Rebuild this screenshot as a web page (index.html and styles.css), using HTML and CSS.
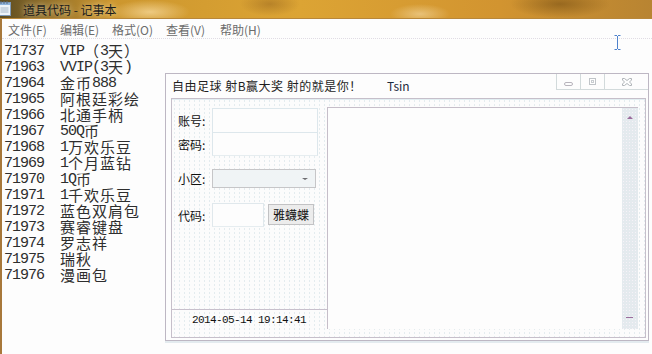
FILE: index.html
```html
<!DOCTYPE html>
<html lang="zh-CN">
<head>
    <meta charset="UTF-8">
    <title>道具代码 - 记事本</title>
    <link rel="stylesheet" href="styles.css">
</head>
<body>
    <div class="notepad">
        <div class="titlebar">
            <svg class="app-icon" width="14" height="16" viewBox="0 0 14 16">
                <rect x="0.5" y="2.5" width="12" height="13" fill="#eef4fa" stroke="#7f9ab8"/>
                <rect x="1" y="3" width="11" height="2" fill="#8fb4dc"/>
                <path d="M3 1v3M6 1v3M9 1v3" stroke="#5a6e88" stroke-width="1"/>
                <path d="M2.5 8h8M2.5 10h8M2.5 12h8" stroke="#a8b8c8" stroke-width="1"/>
            </svg>
            <span class="title-text">道具代码 - 记事本</span>
        </div>
        <div class="window-body">
            <div class="menubar">
                <span>文件(F)</span>
                <span>编辑(E)</span>
                <span class="wide">格式(O)</span>
                <span class="wide">查看(V)</span>
                <span>帮助(H)</span>
            </div>
            <div class="editor">
                <div class="line"><span class="code">71737</span>VIP<span class="w">（</span>3<span class="w">天）</span></div>
                <div class="line"><span class="code">71963</span>VVIP(3<span class="w">天</span>)</div>
                <div class="line"><span class="code">71964</span><span class="w">金币</span>888</div>
                <div class="line"><span class="code">71965</span><span class="w">阿根廷彩绘</span></div>
                <div class="line"><span class="code">71966</span><span class="w">北通手柄</span></div>
                <div class="line"><span class="code">71967</span>50Q<span class="w">币</span></div>
                <div class="line"><span class="code">71968</span>1<span class="w">万欢乐豆</span></div>
                <div class="line"><span class="code">71969</span>1<span class="w">个月蓝钻</span></div>
                <div class="line"><span class="code">71970</span>1Q<span class="w">币</span></div>
                <div class="line"><span class="code">71971</span>1<span class="w">千欢乐豆</span></div>
                <div class="line"><span class="code">71972</span><span class="w">蓝色双肩包</span></div>
                <div class="line"><span class="code">71973</span><span class="w">赛睿键盘</span></div>
                <div class="line"><span class="code">71974</span><span class="w">罗志祥</span></div>
                <div class="line"><span class="code">71975</span><span class="w">瑞秋</span></div>
                <div class="line"><span class="code">71976</span><span class="w">漫画包</span></div>
            </div>
        </div>
        <svg class="ibeam" width="7" height="15" viewBox="0 0 7 15">
            <path d="M0.5 0.5h2.5M4 0.5h2.5M3.5 1v13M0.5 14.5h2.5M4 14.5h2.5" stroke="#4f82cc" stroke-width="1"/>
        </svg>
    </div>

    <div class="dialog">
        <div class="dlg-title">
            <span class="dlg-caption">自由足球 射B赢大奖 射的就是你！</span>
            <span class="dlg-user">Tsin</span>
            <div class="win-btns">
                <div class="win-btn"><span class="ico-min"></span></div>
                <div class="win-btn"><span class="ico-max"></span></div>
                <div class="win-btn close">
                    <svg width="10" height="8" viewBox="0 0 10 8">
                        <path d="M0.5 0.5h2l2.5 2 2.5-2h2v1.5l-2 2 2 2v1.5h-2l-2.5-2-2.5 2h-2v-1.5l2-2-2-2z" fill="none" stroke="#b0b4b8" stroke-width="1"/>
                    </svg>
                </div>
            </div>
        </div>
        <div class="frame">
            <div class="left-pane">
                <div class="form">
                    <div class="row">
                        <label>账号:</label>
                        <div class="field"></div>
                    </div>
                    <div class="row">
                        <label>密码:</label>
                        <div class="field"></div>
                    </div>
                    <div class="row row-combo">
                        <label>小区:</label>
                        <div class="combo"><span class="arrow"></span></div>
                    </div>
                    <div class="row row-code">
                        <label>代码:</label>
                        <div class="field short"></div>
                        <button class="btn">雅蠛蝶</button>
                    </div>
                </div>
                <div class="status">2014-05-14 19:14:41</div>
            </div>
            <div class="log">
                <div class="log-body"></div>
                <div class="scrollbar">
                    <span class="sb-up"></span>
                    <span class="sb-down"></span>
                </div>
            </div>
        </div>
    </div>
</body>
</html>
```

FILE: styles.css
```css
body {
    margin: 0;
    width: 652px;
    height: 354px;
    overflow: hidden;
    background-color: #fdfdfd;
    font-family: "Noto Sans CJK SC", sans-serif;
}

.notepad {
    position: relative;
    height: 354px;
}

/* aero title bar */
.titlebar {
    height: 18px;
    display: flex;
    align-items: center;
    border-bottom: 1px solid #b8873a;
    background:
        radial-gradient(ellipse 40px 12px at 150px 12px, rgba(245, 214, 150, 0.8), transparent),
        radial-gradient(ellipse 30px 10px at 420px 14px, rgba(240, 210, 150, 0.7), transparent),
        radial-gradient(ellipse 50px 14px at 560px 4px, rgba(120, 80, 20, 0.6), transparent),
        radial-gradient(ellipse 30px 12px at 270px 4px, rgba(150, 100, 30, 0.5), transparent),
        linear-gradient(90deg, #5c4c22 0px, #8a6a28 40px, #cc962e 110px, #dca434 300px, #d29430 500px, #b88432 652px);
}

.app-icon {
    margin-left: -2px;
    margin-top: -2px;
}

.title-text {
    margin-left: 11px;
    font-size: 12px;
    color: #1c1c1c;
    text-shadow: 0 0 6px rgba(255, 240, 200, 0.9);
}

.window-body {
    border-left: 2px solid #a8783a;
    height: 335px;
}

.menubar {
    height: 17px;
    padding-top: 2px;
    padding-left: 6px;
    display: flex;
    font-size: 12px;
    line-height: 18px;
    color: #6c6c6c;
    border-bottom: 1px dotted #e0dce4;
}

.menubar span {
    width: 52px;
}

.menubar .wide {
    width: 54px;
}

.editor {
    padding: 5px 0 0 2px;
    font-family: "Liberation Mono", monospace;
    font-size: 15px;
    letter-spacing: -1px;
    color: #2e2e2e;
}

.line {
    height: 16px;
    line-height: 16px;
    white-space: pre;
}

.code {
    display: inline-block;
    width: 56px;
    vertical-align: top;
}

.w {
    display: inline-block;
    height: 16px;
    vertical-align: top;
    margin-top: -1px;
    font-family: "Noto Sans CJK SC", sans-serif;
    font-size: 15px;
    letter-spacing: 1px;
    line-height: 15px;
}

.ibeam {
    position: absolute;
    left: 614px;
    top: 35px;
}

/* floating dialog */
.dialog {
    position: absolute;
    left: 165px;
    top: 73px;
    width: 484px;
    height: 268px;
    box-sizing: border-box;
    border: 1px solid #bdb7c3;
    background-color: #fdfdfd;
    box-shadow: 0 2px 0 #e3ebef;
    font-size: 12px;
    color: #1e1e1e;
}

.dlg-title {
    height: 24px;
    display: flex;
    align-items: flex-start;
    padding-left: 6px;
}

.dlg-caption {
    width: 215px;
    line-height: 24px;
    letter-spacing: 0.5px;
}

.dlg-user {
    line-height: 24px;
    color: #1e2a3c;
}

.win-btns {
    display: flex;
    margin-left: auto;
    height: 16px;
}

.win-btn {
    width: 23px;
    height: 15px;
    border-left: 1px solid #d2dadb;
    border-bottom: 1px solid #d2dadb;
    display: flex;
    align-items: center;
    justify-content: center;
}

.win-btn.close {
    width: 43px;
}

.ico-min {
    width: 7px;
    height: 2px;
    border: 1px solid #b8b4bc;
    border-radius: 2px;
    margin-top: 4px;
}

.ico-max {
    width: 5px;
    height: 5px;
    border: 1px solid #c0c4c8;
    box-shadow: inset 0 0 0 1px #fff, inset 0 0 0 2px #c8ccd0;
}

.frame {
    margin: 0 2px 0 5px;
    height: 240px;
    box-sizing: border-box;
    border: 1px solid #c6bfca;
    box-shadow: inset 0 1px 0 #e2eef2;
    display: flex;
    background-color: #fcfcfc;
    background-image: radial-gradient(circle, #e4ecef 0.5px, transparent 0.7px);
    background-size: 5px 4px;
}

.left-pane {
    width: 155px;
    display: flex;
    flex-direction: column;
}

.form {
    flex: 1;
    padding: 9px 0 0 6px;
}

.row {
    display: flex;
    align-items: center;
    height: 24px;
}

.row label {
    width: 34px;
    font-size: 12px;
    color: #111;
}

.field {
    width: 104px;
    height: 23px;
    border: 1px solid #dde7ec;
    border-bottom: none;
    background-color: #fdfdfd;
}

.row + .row .field {
    border-bottom: 1px solid #e6edf0;
    height: 22px;
}

.row-combo {
    margin-top: 13px;
    height: 19px;
}

.combo {
    width: 102px;
    height: 17px;
    border: 1px solid #c6c6c8;
    background-color: #e8eef1;
    background-image: radial-gradient(circle, #f8fafb 0.6px, transparent 0.8px);
    background-size: 2px 2px;
    position: relative;
}

.arrow {
    position: absolute;
    right: 7px;
    top: 8px;
    border-left: 3px solid transparent;
    border-right: 3px solid transparent;
    border-top: 2px solid #6c6c70;
}

.row-code {
    margin-top: 15px;
}

.field.short {
    width: 50px;
    height: 23px;
    border: 1px solid #e0e8ec;
}

.btn {
    margin-left: 4px;
    margin-top: -2px;
    width: 46px;
    height: 21px;
    padding: 0;
    border: 1px solid #c2c2c4;
    border-radius: 0;
    background-color: #ececec;
    font-family: "Noto Sans CJK SC", sans-serif;
    font-size: 12px;
    color: #111;
}

.status {
    height: 27px;
    border-top: 1px solid #c8c0cc;
    margin-left: -1px;
    text-align: center;
    line-height: 20px;
    font-family: "Liberation Mono", monospace;
    font-size: 11px;
    letter-spacing: -0.6px;
    color: #111;
}

.log {
    margin-top: 8px;
    width: 311px;
    height: 222px;
    box-sizing: border-box;
    border-top: 1px solid #c6bec9;
    border-left: 1px solid #c6bec9;
    background-color: #fdfdfd;
    display: flex;
}

.log-body {
    flex: 1;
}

.scrollbar {
    width: 16px;
    background-color: #e4eaee;
    background-image: radial-gradient(circle, #f6f2f8 0.6px, transparent 0.8px);
    background-size: 3px 3px;
    position: relative;
}

.sb-up {
    position: absolute;
    left: 5px;
    top: 8px;
    border-left: 3px solid transparent;
    border-right: 3px solid transparent;
    border-bottom: 3px solid #9a6c9c;
}

.sb-down {
    position: absolute;
    left: 4px;
    bottom: 11px;
    width: 7px;
    height: 1px;
    background-color: #9a6c9c;
}
```
